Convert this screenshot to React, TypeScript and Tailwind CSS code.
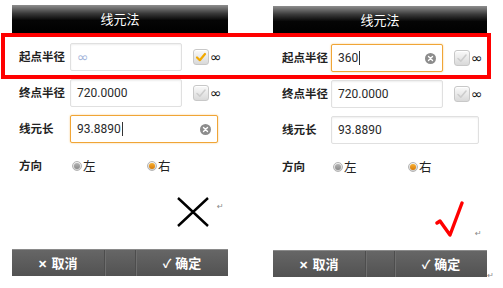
import React from "react";

const cjk = "font-['Noto_Sans_CJK_SC',sans-serif]";
const num = "font-['Roboto','Noto_Sans_CJK_SC',sans-serif]";

const CheckBox = ({ on }: { on: boolean }) => (
  <div className="flex h-[16px] w-[16px] items-center justify-center rounded-[3px] border border-[#c8c8c8] bg-gradient-to-b from-[#fafafa] to-[#d9d9d9] shadow-[inset_0_1px_0_#fff]">
    <svg width="12" height="12" viewBox="0 0 12 12">
      <path
        d="M2 6.5 L4.8 9.2 L10 3"
        fill="none"
        stroke={on ? "#f2a900" : "#cdcdcd"}
        strokeWidth={on ? 2.2 : 1.6}
        strokeLinecap="round"
        strokeLinejoin="round"
      />
    </svg>
  </div>
);

const Radio = ({ on, label }: { on: boolean; label: string }) => (
  <div className="flex items-center">
    <div className="flex h-[10px] w-[10px] items-center justify-center rounded-full border border-[#b5b5b5] bg-gradient-to-b from-[#f4f4f4] to-[#cfcfcf]">
      <div
        className={
          on
            ? "h-[6px] w-[6px] rounded-full bg-gradient-to-b from-[#f7b030] to-[#d97a00]"
            : "h-[6px] w-[6px] rounded-full bg-gradient-to-b from-[#b5b5b5] to-[#8a8a8a]"
        }
      />
    </div>
    <span className={`ml-[1px] text-[12.5px] leading-none text-[#222] ${cjk}`}>{label}</span>
  </div>
);

const ClearIcon = () => (
  <div className="flex h-[11px] w-[11px] items-center justify-center rounded-full bg-[#8c8c8c]">
    <svg width="7" height="7" viewBox="0 0 7 7">
      <path d="M1.5 1.5 L5.5 5.5 M5.5 1.5 L1.5 5.5" stroke="#fff" strokeWidth="1.4" strokeLinecap="round" />
    </svg>
  </div>
);

type InputProps = {
  value?: string;
  placeholder?: string;
  focused?: boolean;
  wide?: boolean;
};

const Input = ({ value, placeholder, focused, wide }: InputProps) => (
  <div
    className={`flex h-[28px] items-center rounded-[2px] bg-white pl-[6px] pr-[6px] ${
      wide ? "w-[148px]" : "w-[112px]"
    } ${
      focused
        ? "border-[1.5px] border-[#f0a536] shadow-[0_0_2px_#f7c77a]"
        : "border border-[#e0e0e0] shadow-[inset_0_1px_2px_#eee]"
    }`}
  >
    {value ? (
      <span className={`text-[12px] text-[#2a2a2a] ${num}`}>{value}</span>
    ) : (
      <span className="font-['DejaVu_Sans',sans-serif] text-[14px] text-[#a3b4da]">{placeholder}</span>
    )}
    {focused && <span className="ml-[1px] h-[14px] w-[1px] bg-[#333]" />}
    <span className="flex-1" />
    {focused && <ClearIcon />}
  </div>
);

type Row = { label: string; input: InputProps; check?: boolean | null };

const Panel = ({
  rows,
  padTop,
  labelPad,
  mark,
  width,
  bar,
  tail,
}: {
  rows: Row[];
  padTop: string;
  labelPad: string;
  mark: "x" | "check";
  width: string;
  bar: [string, string, string];
  tail?: boolean;
}) => (
  <div className={`flex flex-col ${padTop} ${width}`}>
    <div className="flex h-[28px] items-center justify-center bg-[linear-gradient(to_bottom,#8e8e8e_0%,#3a3a3a_30%,#050505_55%,#000_100%)]">
      <span className={`text-[13px] text-white ${cjk}`}>线元法</span>
    </div>

    <div className="flex flex-col gap-[8px] pt-[10px]">
      {rows.map((r) => (
        <div key={r.label} className="flex items-center">
          <span className={`${labelPad} w-[58px] text-[11.5px] font-bold text-[#222] ${cjk}`}>{r.label}</span>
          <Input {...r.input} />
          {r.check !== undefined && r.check !== null && (
            <div className="ml-[11px] flex items-center">
              <CheckBox on={r.check} />
              <span className="ml-[1px] font-['DejaVu_Sans',sans-serif] text-[14px] leading-none text-[#111]">∞</span>
            </div>
          )}
        </div>
      ))}
    </div>

    <div className="mt-[13px] flex h-[20px] items-center">
      <span className={`${labelPad} w-[58px] text-[11.5px] font-bold text-[#222] ${cjk}`}>方向</span>
      <div className="ml-[2px] w-[75px]">
        <Radio on={false} label="左" />
      </div>
      <Radio on label="右" />
    </div>

    <div className="flex h-[73px] items-start">
      {mark === "x" ? (
        <>
          <svg className="ml-[165px] mt-[21px]" width="32" height="30" viewBox="0 0 32 30">
            <path d="M1 1 L31 29 M31 1 L1 29" stroke="#000" strokeWidth="2.4" />
          </svg>
          <span className="ml-[8px] mt-[25px] font-['DejaVu_Sans',sans-serif] text-[8px] text-[#888]">↵</span>
        </>
      ) : (
        <>
          <svg className="ml-[162px] mt-[24px]" width="30" height="38" viewBox="0 0 30 38">
            <path d="M2 22 L5 20 L15 34 L27 2" fill="none" stroke="#ff0000" strokeWidth="3.4" strokeLinejoin="round" strokeLinecap="round" />
          </svg>
          <span className="ml-[10px] mt-[51px] font-['DejaVu_Sans',sans-serif] text-[8px] text-[#888]">↵</span>
        </>
      )}
    </div>

    <div className="relative flex h-[27px] border-t border-[#8a8a8a] bg-gradient-to-b from-[#666] to-[#525252] text-white">
      <div className={`flex ${bar[0]} items-center justify-center`}>
        <span className={`text-[13px] font-bold ${cjk}`}>
          <span className="mr-[4px] text-[11px]">✕</span>取消
        </span>
      </div>
      <div className={`${bar[1]} border-l border-[#4d4d4d] shadow-[inset_1px_0_0_#6e6e6e]`} />
      <div className={`flex ${bar[2]} items-center justify-center border-l border-[#4d4d4d] shadow-[inset_1px_0_0_#6e6e6e]`}>
        <span className={`text-[13px] font-bold ${cjk}`}>
          <span className="mr-[4px] text-[12px]">✓</span>确定
        </span>
      </div>
      {tail && (
        <span className="absolute -right-[7px] bottom-[-5px] font-['DejaVu_Sans',sans-serif] text-[8px] text-[#888]">↵</span>
      )}
    </div>
  </div>
);

export default function App() {
  return (
    <div className="relative flex h-[288px] w-[503px] overflow-hidden bg-white">
      <div className="ml-[12px]">
        <Panel
          width="w-[216px]"
          padTop="pt-[5px]"
          labelPad="pl-[7px]"
          mark="x"
          bar={["w-[92px]", "w-[31px]", "flex-1"]}
          rows={[
            { label: "起点半径", input: { placeholder: "∞" }, check: true },
            { label: "终点半径", input: { value: "720.0000" }, check: false },
            { label: "线元长", input: { value: "93.8890", focused: true, wide: true } },
          ]}
        />
      </div>
      <div className="ml-[45px]">
        <Panel
          width="w-[214px]"
          padTop="pt-[6px]"
          labelPad="pl-[9px]"
          mark="check"
          tail
          bar={["w-[92px]", "w-[29px]", "flex-1"]}
          rows={[
            { label: "起点半径", input: { value: "360", focused: true }, check: false },
            { label: "终点半径", input: { value: "720.0000" }, check: false },
            { label: "线元长", input: { value: "93.8890", wide: true } },
          ]}
        />
      </div>

      <div className="absolute left-[1px] top-[33px] h-[46px] w-[490px] border-4 border-[#ff0000]" />
    </div>
  );
}
